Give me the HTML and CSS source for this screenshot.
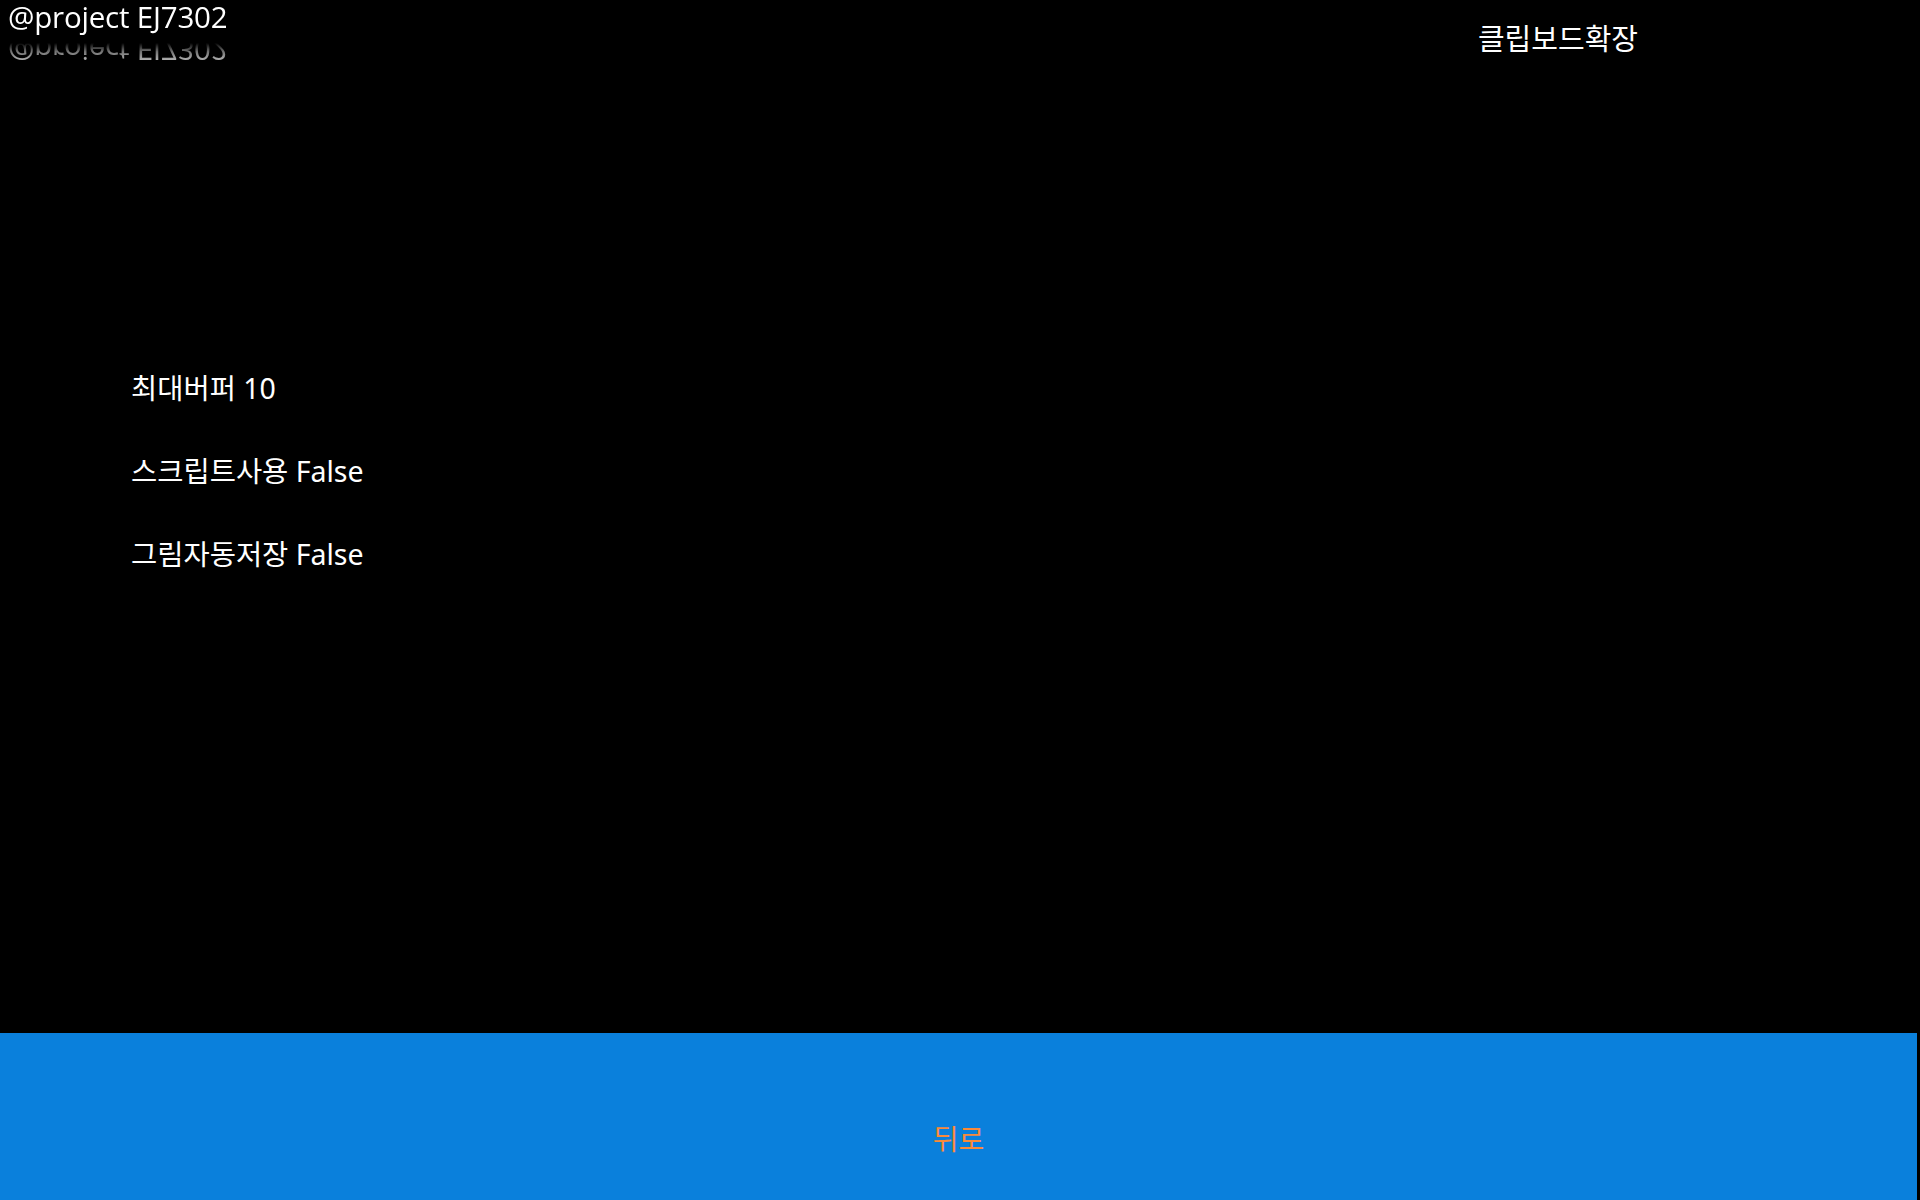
FILE: index.html
```html
<!DOCTYPE html>
<html lang="ko">
<head>
<meta charset="utf-8">
<title>클립보드확장</title>
<link rel="stylesheet" href="styles.css">
</head>
<body>
<div class="page">
  <header class="top">
    <div class="brand">@project EJ7302</div>
    <h1 class="heading">클립보드확장</h1>
  </header>
  <main class="settings">
    <div class="row">최대버퍼 10</div>
    <div class="row">스크립트사용 False</div>
    <div class="row">그림자동저장 False</div>
  </main>
  <footer class="bottom">
    <button class="back">뒤로</button>
  </footer>
</div>
</body>
</html>
```

FILE: styles.css
```css
html, body {
  margin: 0;
  padding: 0;
  background: #000;
}
body {
  font-family: "Noto Sans", "Noto Sans CJK KR", sans-serif;
  color: #fff;
}
.page {
  width: 1920px;
  height: 1200px;
  display: flex;
  flex-direction: column;
}
.top {
  display: flex;
  justify-content: space-between;
  align-items: flex-start;
  height: 80px;
  padding-right: 282px;
}
.brand {
  font-family: "Open Sans", "Noto Sans", sans-serif;
  font-size: 29.5px;
  line-height: 32px;
  margin: 1px 0 0 8px;
  letter-spacing: -0.2px;
  -webkit-box-reflect: below 1px linear-gradient(to bottom, rgba(255,255,255,0.85) 0%, rgba(255,255,255,0.45) 45%, transparent 72%);
}
.heading {
  margin: 17px 0 0 0;
  font-family: "Noto Sans CJK KR", sans-serif;
  font-weight: 400;
  font-size: 29px;
  line-height: 40px;
}
.settings {
  flex: 1;
  display: flex;
  flex-direction: column;
  gap: 43px;
  padding: 288px 0 0 131px;
}
.row {
  font-family: "Noto Sans", "Noto Sans CJK KR", sans-serif;
  font-size: 28.5px;
  line-height: 40px;
}
.bottom {
  width: 1917px;
  height: 167px;
  background: #0a80dc;
  display: flex;
  justify-content: center;
  align-items: flex-start;
}
.back {
  margin-top: 87px;
  background: none;
  border: 0;
  padding: 0;
  color: #fa8a3a;
  font-family: "Noto Sans CJK KR", sans-serif;
  font-size: 28px;
  line-height: 36px;
}
```
